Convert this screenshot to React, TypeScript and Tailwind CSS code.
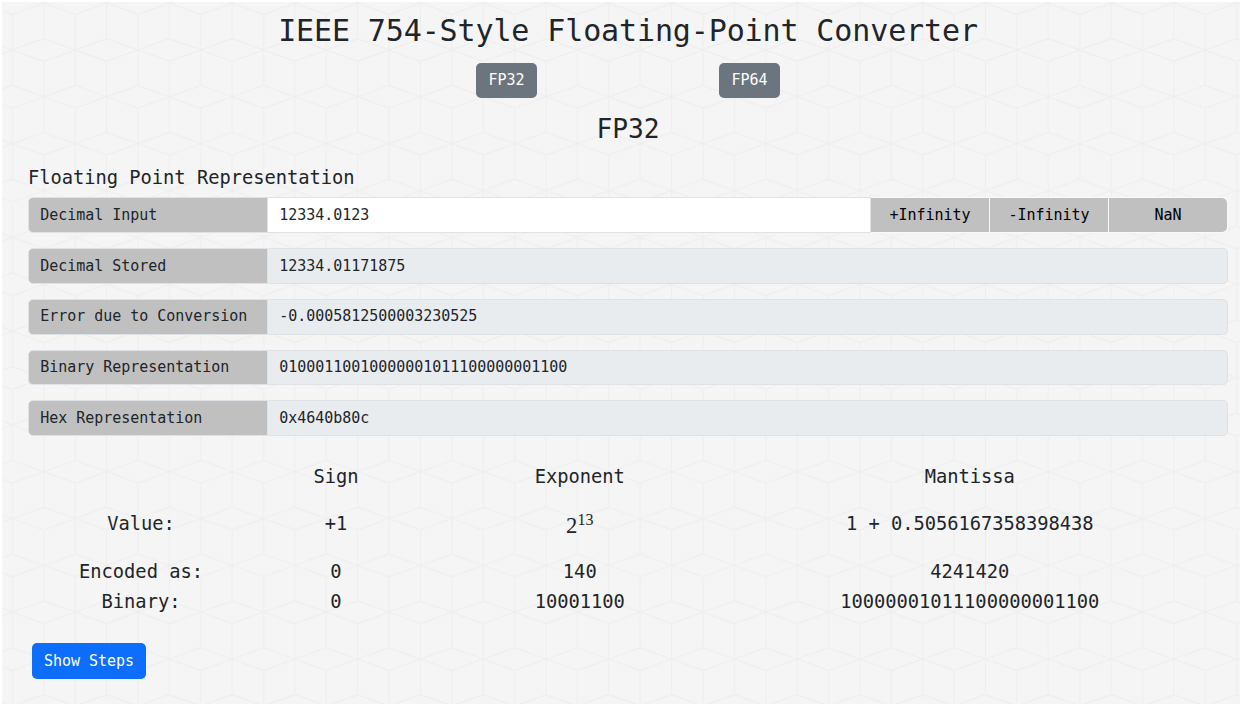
import React from "react";

const fields = [
  { label: "Decimal Stored", value: "12334.01171875" },
  { label: "Error due to Conversion", value: "-0.0005812500003230525" },
  { label: "Binary Representation", value: "01000110010000001011100000001100" },
  { label: "Hex Representation", value: "0x4640b80c" },
];

function CubePattern() {
  return (
    <svg className="absolute inset-0 size-full" aria-hidden="true">
      <defs>
        <pattern id="cubes" width="62.78" height="93.72" patternUnits="userSpaceOnUse" x="10.4" y="1.1">
          <path
            d="M0 46.86 L31.39 35.5 L62.78 46.86 L31.39 58.2 Z M0 11.35 L31.39 0 L62.78 11.35 M0 82.4 L31.39 93.72 L62.78 82.4 M31.39 0 V35.5 M31.39 58.2 V93.72 M0 11.35 V82.4 M62.78 11.35 V82.4"
            fill="none"
            stroke="#eeeeee"
            strokeWidth="1.2"
          />
        </pattern>
      </defs>
      <rect width="100%" height="100%" fill="url(#cubes)" />
    </svg>
  );
}

function Label({ children }: { children: React.ReactNode }) {
  return (
    <div className="flex w-[239.5px] shrink-0 items-center rounded-l-[5px] border border-[#dee2e6] bg-[#c0c0c0] px-[11.25px]">
      {children}
    </div>
  );
}

export default function App() {
  return (
    <div className="h-[706px] w-[1242px] overflow-hidden bg-white p-[2px]">
      <div className="relative h-[702px] w-[1238px] overflow-hidden bg-[#f5f5f5]">
        <CubePattern />
        <main className="relative flex flex-col pl-[26px] pr-3 pt-[11px] font-['DejaVu_Sans_Mono',monospace] text-[15px] leading-[22.5px] tracking-[-0.002em] text-[#212529]">
          <h1 className="text-center text-[30px] leading-9 tracking-[-0.004em]">IEEE 754-Style Floating-Point Converter</h1>
          <div className="mt-[14px] flex justify-center gap-[182px]">
            <button className="h-[35px] w-[61px] rounded-[5px] bg-[#6c757d] text-white">FP32</button>
            <button className="h-[35px] w-[61px] rounded-[5px] bg-[#6c757d] text-white">FP64</button>
          </div>
          <h2 className="mt-4 text-center text-[26.25px] leading-[31.5px]">FP32</h2>
          <h3 className="mt-[21.5px] text-[18.75px] leading-[22.5px]">Floating Point Representation</h3>
          <div className="mt-[7.75px] flex w-[1200px] flex-col gap-[15px]">
            <div className="flex h-[35.75px]">
              <Label>Decimal Input</Label>
              <div className="-ml-px flex flex-1 items-center border border-[#dee2e6] bg-white px-[11.75px]">12334.0123</div>
              <div className="flex w-[357px] gap-px rounded-r-[5px] bg-[#f8f9fa] py-px pr-px text-black">
                <button className="flex-1 bg-[#c0c0c0]">+Infinity</button>
                <button className="flex-1 bg-[#c0c0c0]">-Infinity</button>
                <button className="flex-1 rounded-r-[5px] bg-[#c0c0c0]">NaN</button>
              </div>
            </div>
            {fields.map((f) => (
              <div key={f.label} className="flex h-[35.75px]">
                <Label>{f.label}</Label>
                <div className="-ml-px flex flex-1 items-center rounded-r-[5px] border border-[#dee2e6] bg-[#e9ecef] px-[11.75px]">
                  {f.value}
                </div>
              </div>
            ))}
          </div>
          <div className="ml-[15.5px] mt-[26px] grid w-[1170px] grid-cols-[195px_195px_292.5px_487.5px] text-center text-[18.75px] leading-[30px]">
            <span />
            <span>Sign</span>
            <span>Exponent</span>
            <span>Mantissa</span>
            <span className="mt-[17px]">Value:</span>
            <span className="mt-[17px]">+1</span>
            <span className="mt-[17px] flex justify-center pt-1 font-['Liberation_Serif',serif] text-[22.7px] leading-[26px]">
              <span>2</span>
              <span className="-mt-[6px] text-[16px]">13</span>
            </span>
            <span className="mt-[17px]">1 + 0.5056167358398438</span>
            <span className="mt-[18px]">Encoded as:</span>
            <span className="mt-[18px]">0</span>
            <span className="mt-[18px]">140</span>
            <span className="mt-[18px]">4241420</span>
            <span>Binary:</span>
            <span>0</span>
            <span>10001100</span>
            <span>10000001011100000001100</span>
          </div>
          <button className="ml-1 mt-[25.75px] h-9 w-[114px] rounded-[5px] bg-[#0d6efd] text-white">Show Steps</button>
        </main>
      </div>
    </div>
  );
}
